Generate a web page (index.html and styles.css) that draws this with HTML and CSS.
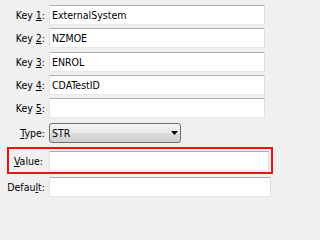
FILE: index.html
```html
<!DOCTYPE html>
<html>
<head>
<meta charset="utf-8">
<link rel="stylesheet" href="styles.css">
</head>
<body>
<div class="form">
  <div class="row">
    <label class="lbl">Key <u>1</u>:</label>
    <div class="field key">ExternalSystem</div>
  </div>
  <div class="row">
    <label class="lbl">Key <u>2</u>:</label>
    <div class="field key">NZMOE</div>
  </div>
  <div class="row">
    <label class="lbl">Key <u>3</u>:</label>
    <div class="field key">ENROL</div>
  </div>
  <div class="row">
    <label class="lbl">Key <u>4</u>:</label>
    <div class="field key">CDATestID</div>
  </div>
  <div class="row">
    <label class="lbl">Key <u>5</u>:</label>
    <div class="field key"></div>
  </div>
  <div class="row row-type">
    <label class="lbl"><u>T</u>ype:</label>
    <div class="select">
      <span>STR</span>
      <svg class="arrow" width="7" height="4" viewBox="0 0 7 4"><polygon points="0,0 7,0 3.5,4" fill="#000"/></svg>
    </div>
  </div>
  <div class="value-box">
    <label class="lbl"><u>V</u>alue:</label>
    <div class="field value"></div>
  </div>
  <div class="row row-default">
    <label class="lbl">Defau<u>l</u>t:</label>
    <div class="field default"></div>
  </div>
</div>
</body>
</html>
```
FILE: styles.css
```css
html, body {
  margin: 0;
  padding: 0;
  background: #f0f0f0;
}
body {
  font-family: "DejaVu Sans Condensed", "DejaVu Sans", sans-serif;
  font-size: 10.5px;
  color: #000;
}
.form {
  display: flex;
  flex-direction: column;
  padding-top: 5px;
}
.row {
  display: grid;
  grid-template-columns: 45px auto;
  column-gap: 4px;
  align-items: center;
  margin-bottom: 3.25px;
}
.lbl {
  text-align: right;
  line-height: 20px;
  white-space: nowrap;
}
.lbl u {
  text-decoration: underline;
  text-underline-offset: 1px;
}
.field {
  box-sizing: border-box;
  height: 20px;
  background: #fff;
  border: 1px solid;
  border-color: #abadb3 #dbdfe6 #e3e9ef #e2e3ea;
  padding: 0 2px;
  line-height: 18px;
  white-space: nowrap;
  overflow: hidden;
}
.key { width: 216px; }
.row-type { margin-top: 1.75px; margin-bottom: 0; }
.select {
  position: relative;
  box-sizing: border-box;
  width: 132px;
  height: 20px;
  border: 1px solid #707070;
  border-radius: 3px;
  background: linear-gradient(to bottom, #f2f2f2 0%, #ebebeb 50%, #dddddd 50%, #cfcfcf 100%);
  padding: 0 2px;
  line-height: 18px;
}
.arrow {
  position: absolute;
  left: 121px;
  top: 7px;
}
.value-box {
  display: grid;
  grid-template-columns: 34px 220px;
  column-gap: 6px;
  align-items: center;
  box-sizing: content-box;
  width: 261px;
  margin: 4px 0 0 7px;
  padding: 2px 1px 1px 0;
  border: 2px solid #ee1111;
}
.value { width: 220px; }
.row-default { margin-top: 3px; }
.default { width: 222px; }
```
